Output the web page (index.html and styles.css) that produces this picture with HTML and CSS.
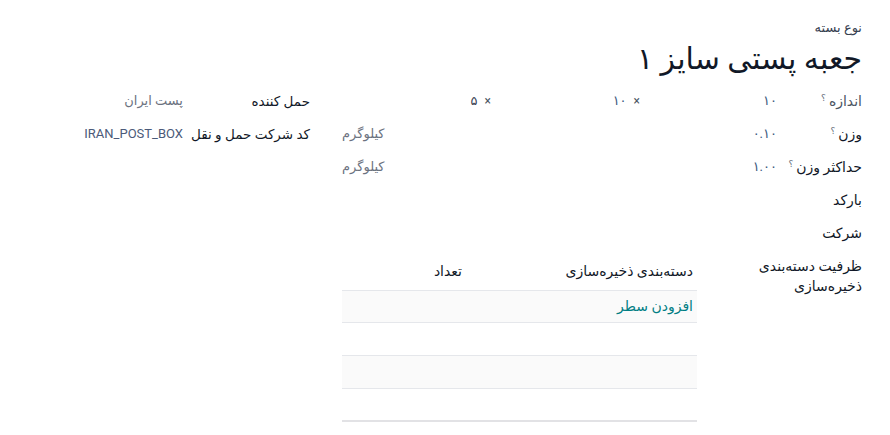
FILE: index.html
```html
<!DOCTYPE html>
<html lang="fa" dir="rtl">
<head>
<meta charset="utf-8">
<title>نوع بسته</title>
<link rel="stylesheet" href="styles.css">
</head>
<body>
<div class="sheet">
  <div class="title-block">
    <div class="type-label">نوع بسته</div>
    <h1 class="title">جعبه پستی سایز ۱</h1>
  </div>
  <div class="groups">
    <div class="group group-main">
      <div class="row">
        <div class="label light">اندازه<sup class="help">؟</sup></div>
        <div class="value dims">
          <span class="dim"><span class="num">۱۰</span></span>
          <span class="dim"><span class="times">×</span><span class="num">۱۰</span></span>
          <span class="dim"><span class="times">×</span><span class="num dark">۵</span></span>
        </div>
      </div>
      <div class="row">
        <div class="label">وزن<sup class="help">؟</sup></div>
        <div class="value unit-field"><span class="num">۰.۱۰</span><span class="unit">کیلوگرم</span></div>
      </div>
      <div class="row">
        <div class="label">حداکثر وزن<sup class="help">؟</sup></div>
        <div class="value unit-field"><span class="num">۱.۰۰</span><span class="unit">کیلوگرم</span></div>
      </div>
      <div class="row">
        <div class="label">بارکد</div>
        <div class="value"></div>
      </div>
      <div class="row">
        <div class="label">شرکت</div>
        <div class="value"></div>
      </div>
      <div class="row row-table">
        <div class="label wrap"><span class="line">ظرفیت دسته‌بندی</span> <span class="line">ذخیره‌سازی</span></div>
        <div class="value">
          <table class="list">
            <thead>
              <tr><th class="col-cat">دسته‌بندی ذخیره‌سازی</th><th class="col-qty">تعداد</th></tr>
            </thead>
            <tbody>
              <tr class="odd"><td colspan="2"><a class="add-line" href="#">افزودن سطر</a></td></tr>
              <tr><td colspan="2"></td></tr>
              <tr class="odd"><td colspan="2"></td></tr>
              <tr><td colspan="2"></td></tr>
            </tbody>
          </table>
        </div>
      </div>
    </div>
    <div class="group group-side">
      <div class="row">
        <div class="label">حمل کننده</div>
        <div class="value muted">پست ایران</div>
      </div>
      <div class="row">
        <div class="label">کد شرکت حمل و نقل</div>
        <div class="value code">IRAN_POST_BOX</div>
      </div>
    </div>
  </div>
</div>
</body>
</html>
```
FILE: styles.css
```css
* { box-sizing: border-box; }
html, body { margin: 0; padding: 0; background: #fff; }
body {
  font-family: Roboto, "DejaVu Sans", sans-serif;
  font-size: 14px;
  color: #212529;
  direction: rtl;
}
.sheet { padding: 18px 28px 0 20px; }
.type-label { font-size: 13px; color: #374151; line-height: 20px; }
.title {
  margin: 0;
  font-weight: 400;
  font-size: 30px;
  line-height: 42px;
  color: #111827;
}
.groups { display: flex; gap: 32px; margin-top: 11px; }
.group-main { width: 520px; flex: none; }
.group-side { width: 245px; flex: none; }
.row { display: grid; align-items: start; min-height: 33px; }
.group-main .row { grid-template-columns: 85px 1fr; }
.group-side .row { grid-template-columns: 127px 1fr; }
.group-side .label { font-size: 13.5px; white-space: nowrap; }
.label {
  font-weight: 500;
  color: #111827;
  line-height: 20px;
}
.label.light { color: #4b5563; }
.help { font-size: 9px; color: #6b7280; vertical-align: top; position: relative; top: -3px; margin-right: 3px; }
.label.wrap { line-height: 20px; }
.label.wrap .line { display: block; white-space: nowrap; }
.value { line-height: 20px; color: #4b5a79; font-size: 13px; }
.dims { display: flex; }
.dim { flex: 1; display: flex; gap: 7px; }
.dim:first-child { flex: 0 0 137px; }
.times { color: #4b5563; font-size: 12px; }
.num { color: #3d5a80; }
.num.dark { color: #374151; }
.unit-field { display: flex; justify-content: space-between; }
.unit { color: #6b7280; font-size: 13px; }
.muted { color: #6b7280; }
.code { color: #4b5a79; }
.row-table { min-height: 0; }
.list {
  width: 355px;
  margin-right: 80px;
  border-collapse: collapse;
  margin-top: -3px;
  font-size: 14px;
}
.list th {
  font-weight: 500;
  color: #111827;
  text-align: right;
  height: 37px;
  padding: 0 4px;
  border-bottom: 1px solid #e5e7eb;
}
.list th.col-qty { width: 120px; padding-right: 0; }
.list td { height: 32.7px; border-bottom: 1px solid #e5e7eb; padding: 0 4px; }
.list tr:last-child td { border-bottom: 2px solid #e2e2e5; }
.list tr.odd td { background: #fafafa; }
.add-line { color: #017e84; text-decoration: none; }
```
